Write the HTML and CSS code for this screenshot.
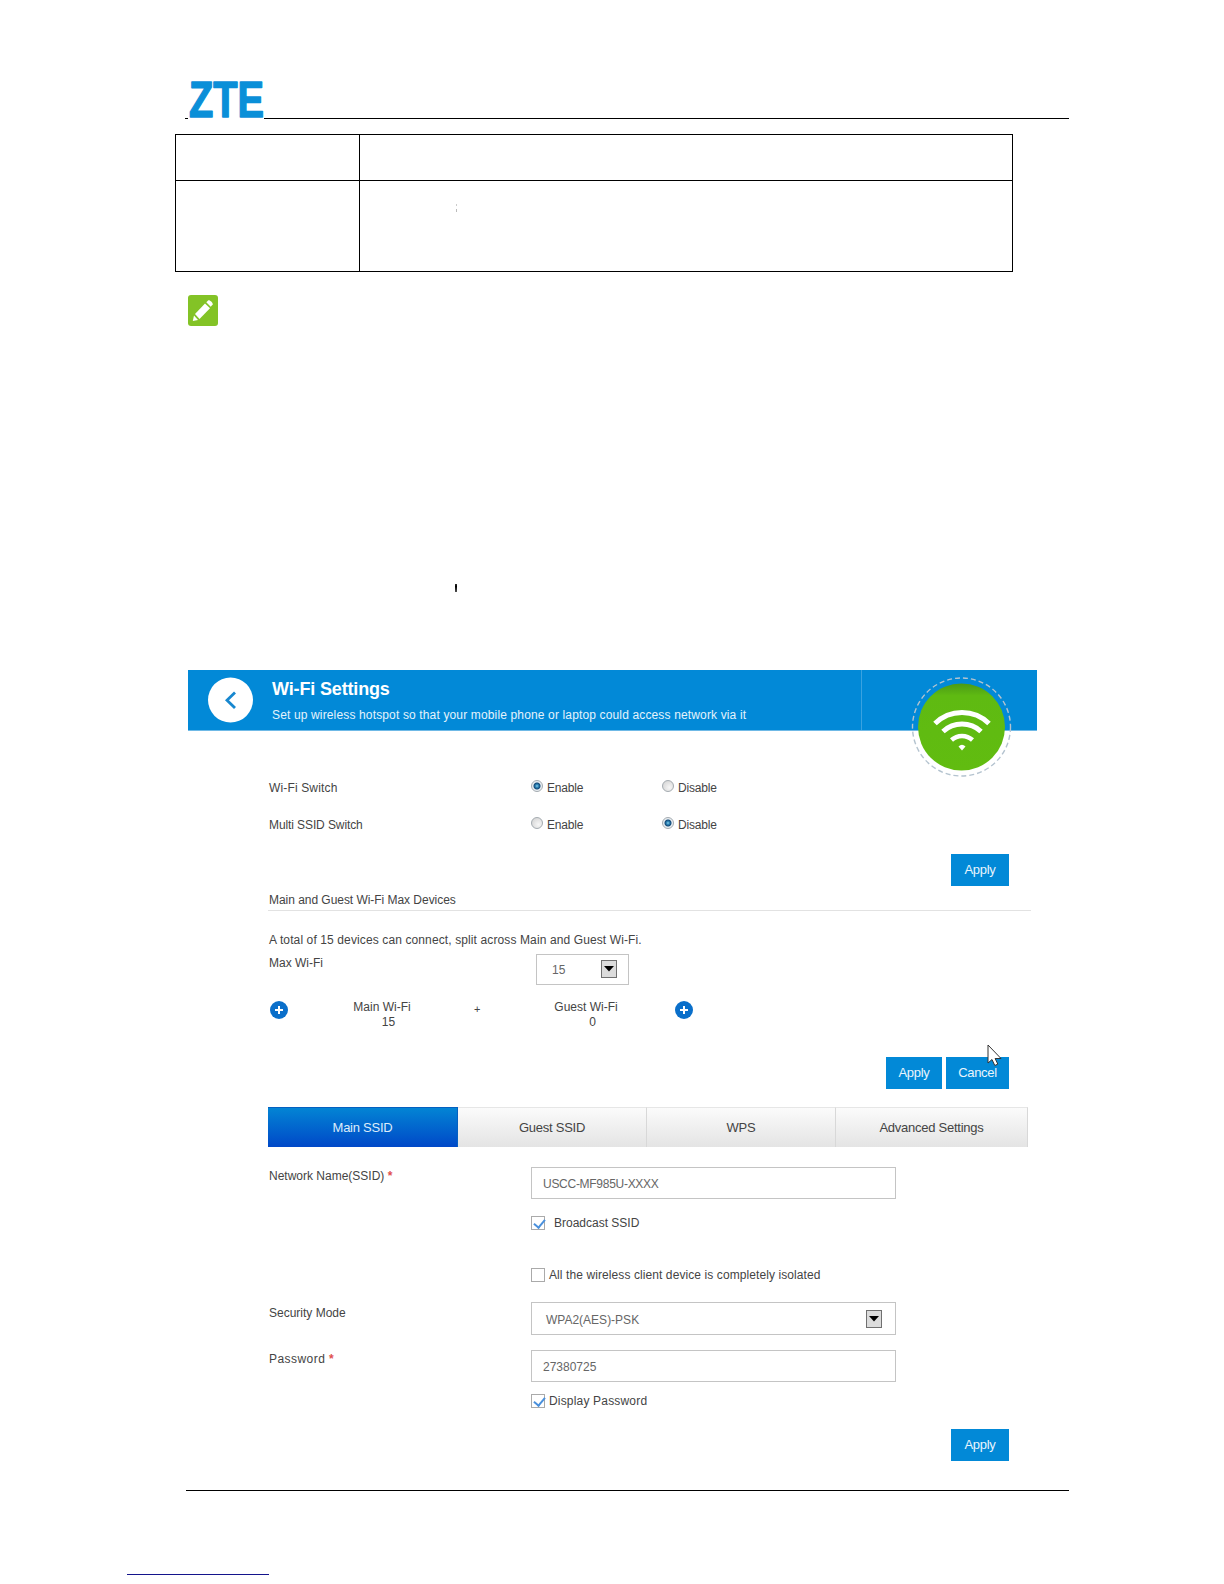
FILE: index.html
```
<!DOCTYPE html>
<html lang="en">
<head>
  <meta charset="UTF-8">
  <meta name="viewport" content="width=device-width, initial-scale=1.0">
  <title>Wi-Fi Settings</title>
  <link rel="stylesheet" href="styles.css">
</head>
<body>
  <header class="page-header">
    <svg class="logo" width="76" height="64" viewBox="0 0 76 64">
      <text x="1" y="54" textLength="75" lengthAdjust="spacingAndGlyphs">ZTE</text>
    </svg>
  </header>

  <table class="params">
    <tr class="row-small"><td class="name"></td><td></td></tr>
    <tr class="row-big"><td class="name"></td><td><div class="speck"></div></td></tr>
  </table>

  <svg class="note-icon" width="30" height="31" viewBox="0 0 30 31">
    <rect width="30" height="31" rx="3" fill="#83c326"/>
    <path d="M4.800 26l1.200-5.500 4 4.500z" fill="#fff"/>
    <path d="M7 19L17 8.500l5 4.800L11.500 24z" fill="#fff"/>
    <path d="M18.300 7.300l2-2c1.400-.6 5 2.500 4.400 4.300l-2 2.200z" fill="#fff"/>
  </svg>
  <div class="tick"></div>

  <main class="panel">
    <div class="banner">
      <svg class="back" width="46" height="46" viewBox="0 0 46 46">
        <circle cx="23.500" cy="23" r="22.500" fill="#fff"/>
        <path d="M28 15.500L20 23.300l8 7.800" fill="none" stroke="#1787cf" stroke-width="2.800"/>
      </svg>
      <div class="banner-text">
        <h1>Wi-Fi Settings</h1>
        <p>Set up wireless hotspot so that your mobile phone or laptop could access network via it</p>
      </div>
      <div class="banner-side"></div>
      <svg class="wifi" width="104" height="104" viewBox="0 0 104 104">
        <defs>
          <linearGradient id="green" x1="0" y1="0" x2="0" y2="1">
            <stop offset="0" stop-color="#4b9a16"/>
            <stop offset=".14" stop-color="#5fba12"/>
            <stop offset="1" stop-color="#61bc10"/>
          </linearGradient>
        </defs>
        <path d="M2.500 56a49.500 49.500 0 0 0 99 0z" fill="#fff"/>
        <circle cx="51.500" cy="52" r="49" fill="none" stroke="#b4c3cf" stroke-width="1.400" stroke-dasharray="5 3"/>
        <circle cx="51.500" cy="52" r="43.500" fill="url(#green)"/>
        <g fill="none" stroke="#fff" stroke-width="5">
          <path d="M25 48.500a38.500 38.500 0 0 1 54 0"/>
          <path d="M33 56.500a28 28 0 0 1 38 0"/>
          <path d="M41.500 65a15.500 15.500 0 0 1 21 0" stroke-width="4.500"/>
        </g>
        <path d="M48.500 71.500q3.500-3.500 7 0L52 75.500z" fill="#fff"/>
      </svg>
    </div>

    <div class="content">
      <div class="row switch-row">
        <span class="loose">Wi-Fi Switch</span>
        <label><input type="radio" name="wifi" checked>Enable</label>
        <label><input type="radio" name="wifi">Disable</label>
      </div>
      <div class="row switch-row">
        <span class="tight">Multi SSID Switch</span>
        <label><input type="radio" name="multi">Enable</label>
        <label><input type="radio" name="multi" checked>Disable</label>
      </div>
      <div class="buttons">
        <button>Apply</button>
      </div>

      <h2>Main and Guest Wi-Fi Max Devices</h2>
      <p class="info">A total of 15 devices can connect, split across Main and Guest Wi-Fi.</p>
      <div class="max-row">
        <span>Max Wi-Fi</span>
        <div class="select small">
          <span>15</span>
          <svg width="16" height="18" viewBox="0 0 16 18"><rect class="arrow-box" x=".5" y=".5" width="15" height="17"/><path d="M3 6h10l-5 5.500z"/></svg>
        </div>
      </div>
      <div class="counts">
        <svg class="plus" width="18" height="18" viewBox="0 0 18 18"><circle cx="9" cy="9" r="9"/><path d="M5 9h8M9 5v8"/></svg>
        <div class="main">Main Wi-Fi<br><span class="shift">15</span></div>
        <div class="sign">+</div>
        <div class="guest">Guest Wi-Fi<br><span class="shift">0</span></div>
        <svg class="plus" width="18" height="18" viewBox="0 0 18 18"><circle cx="9" cy="9" r="9"/><path d="M5 9h8M9 5v8"/></svg>
      </div>
      <div class="buttons pair">
        <button class="narrow">Apply</button>
        <button class="wide">Cancel</button>
        <svg class="cursor" width="16" height="23" viewBox="0 0 16 23"><path d="M1 1v18l4-3.500 2.800 6 3-1.400-2.700-5.600H14z"/></svg>
      </div>

      <nav class="tabs">
        <a class="active">Main SSID</a>
        <a>Guest SSID</a>
        <a>WPS</a>
        <a>Advanced Settings</a>
      </nav>

      <form>
        <div class="field">
          <span class="label">Network Name(SSID) <b>*</b></span>
          <input type="text" class="ssid" value="USCC-MF985U-XXXX">
        </div>
        <label class="check broadcast"><input type="checkbox" checked>Broadcast SSID</label>
        <label class="check isolated"><input type="checkbox">All the wireless client device is completely isolated</label>
        <div class="field security">
          <span class="label">Security Mode</span>
          <div class="select">
            <span>WPA2(AES)-PSK</span>
            <svg width="16" height="18" viewBox="0 0 16 18"><rect class="arrow-box" x=".5" y=".5" width="15" height="17"/><path d="M3 6h10l-5 5.500z"/></svg>
          </div>
        </div>
        <div class="field password">
          <span class="label">Password <b>*</b></span>
          <input type="text" value="27380725">
        </div>
        <label class="check display"><input type="checkbox" checked>Display Password</label>
        <div class="buttons">
          <button type="button">Apply</button>
        </div>
      </form>
    </div>
  </main>

  <footer>
    <div class="footer-link"></div>
  </footer>
</body>
</html>
```
FILE: styles.css
```
* { box-sizing: border-box; }
:root {
  --blue: #0289d7;
  --text: #444;
}
body {
  margin: 0;
  height: 1584px;
  overflow: hidden;
  background: #fff;
  color: var(--text);
  font: 12px/14px "Liberation Sans", Arial, sans-serif;
}
h1, h2, p { margin: 0; font-weight: normal; }

.page-header {
  width: 884px;
  height: 119px;
  margin-left: 185px;
  padding: 63px 0 0 3px;
  border-bottom: 1px solid #000;
}
.logo {
  display: block;
  overflow: visible;
  background: #fff;
}
.logo text {
  font: bold 50px "Liberation Sans", Arial, sans-serif;
  fill: #0a8fd8;
  stroke: #0a8fd8;
  stroke-width: 1.5;
  stroke-linejoin: round;
}

.params {
  width: 838px;
  margin: 15px 0 0 175px;
  border-collapse: collapse;
  table-layout: fixed;
}
.params td {
  padding: 0;
  border: 1px solid #000;
  vertical-align: top;
}
.params .name { width: 184px; }
.row-small { height: 46px; }
.row-big { height: 91px; }
.speck {
  width: 1px;
  height: 8px;
  margin: 23px 0 0 96px;
  border-top: 2px solid #ccc;
  border-bottom: 3px solid #bbb;
}
.note-icon {
  display: block;
  margin: 23px 0 0 188px;
}
.tick {
  width: 2px;
  height: 8px;
  margin: 258px 0 0 455px;
  background: linear-gradient(#333, #000 30%, #555);
}

.panel {
  width: 849px;
  margin: 78px 0 0 188px;
}
.banner {
  position: relative;
  display: flex;
  height: 61px;
  padding-left: 19px;
  background: var(--blue);
  border-bottom: 1px solid #6fb9e6;
}
.back { margin-top: 7px; }
.banner-text {
  width: 608px;
  padding: 9px 0 0 19px;
  color: #fff;
}
.banner h1 {
  font-size: 18px;
  font-weight: bold;
  line-height: 20px;
  letter-spacing: -.15px;
}
.banner p {
  margin-top: 9px;
  color: #e4f3fc;
  letter-spacing: .145px;
}
.banner-side {
  flex: 1;
  border-left: 1px solid #3aa2e0;
}
.wifi {
  position: absolute;
  left: 722px;
  top: 5px;
}

.content { padding: 50px 6px 0 80px; }
.row {
  display: grid;
  grid-template-columns: 263px 131px 1fr;
  height: 14px;
}
.row + .row { margin-top: 23px; }
.row span { padding-left: 1px; }
.row label {
  display: flex;
  letter-spacing: -.2px;
}
.loose { letter-spacing: .15px; }
.tight { letter-spacing: -.1px; }
input[type=radio] {
  appearance: none;
  width: 12px;
  height: 12px;
  margin: -1px 4px 0 0;
  border: 1px solid #a4abb0;
  border-radius: 50%;
  background: radial-gradient(circle at 65% 65%, #f6f6f6, #d0d0d0);
}
input[type=radio]:checked {
  background: radial-gradient(circle at 50% 50%, #8fd0ea 0, #2f86b8 1.5px, #134a78 3px, #e9eef2 4px);
}

.buttons {
  display: flex;
  justify-content: flex-end;
  margin: 22px 22px 0 0;
}
button {
  width: 58px;
  height: 32px;
  padding: 0 0 1px;
  border: none;
  background: var(--blue);
  color: #e9f5fd;
  font: 13px "Liberation Sans", Arial, sans-serif;
  letter-spacing: -.3px;
}
.pair {
  position: relative;
  gap: 4px;
  margin-top: 27px;
}
.narrow { width: 56px; }
.wide { width: 63px; }
.cursor {
  position: absolute;
  right: 6px;
  top: -13px;
  fill: #fff;
  stroke: #333;
}

h2 {
  height: 17px;
  margin-top: 8px;
  border-bottom: 1px solid #e2e2e2;
  font-size: 12px;
  line-height: 13px;
  padding-left: 1px;
  letter-spacing: -.04px;
}
.info {
  margin-top: 22px;
  padding-left: 1px;
  letter-spacing: .115px;
}
.max-row {
  display: grid;
  grid-template-columns: 268px 93px;
  margin-top: 7px;
}
.max-row > span { padding: 2px 0 0 1px; }
.select {
  display: flex;
  justify-content: space-between;
  height: 33px;
  padding: 7px 13px 0 14px;
  border: 1px solid #c4c4c4;
  color: #666;
}
.select span { padding-top: 3px; }
.select.small {
  height: 31px;
  padding: 5px 11px 0 15px;
}
.arrow-box {
  fill: #dcdcdc;
  stroke: #707070;
}
.counts {
  display: grid;
  grid-template-columns: 20px 186px 4px 195px 20px;
  margin-top: 15px;
  line-height: 15px;
  text-align: center;
}
.counts .main { padding-left: 2px; }
.counts .guest { padding-left: 21px; }
.counts .shift { padding-left: 13px; }
.sign { font-size: 11px; line-height: 18px; }
.plus { margin: 1px 0 0 2px; }
.plus circle { fill: #0a6fca; }
.plus path { stroke: #fff; stroke-width: 2; }

.tabs {
  display: grid;
  grid-template-columns: 190px 189px 189px 192px;
  width: 760px;
  height: 40px;
  margin-top: 18px;
  text-align: center;
  font-size: 13px;
  letter-spacing: -.25px;
}
.tabs a {
  height: 40px;
  background: linear-gradient(#fbfbfb, #e4e4e4);
  border-top: 1px solid #e6e6e6;
  border-right: 1px solid #d8d8d8;
  line-height: 40px;
}
.tabs .active {
  background: linear-gradient(#0384d4, #0048c8);
  border-color: #0560c0;
  color: #dcecfb;
}

.field {
  display: grid;
  grid-template-columns: 263px 365px;
  margin-top: 20px;
}
.label { padding: 2px 0 0 1px; }
.label b { color: #e05050; }
input[type=text] {
  width: 365px;
  height: 32px;
  padding: 2px 11px 0;
  border: 1px solid #c4c4c4;
  color: #666;
  font: 12px "Liberation Sans", Arial, sans-serif;
}
input.ssid { letter-spacing: -.28px; }
.check {
  display: flex;
  gap: 4px;
  height: 14px;
  margin-left: 263px;
}
input[type=checkbox] {
  appearance: none;
  width: 14px;
  height: 14px;
  margin: 0;
  border: 1px solid #aaa;
  background: #fff;
}
/* tick mark */
input[type=checkbox]:checked::before {
  content: "";
  display: block;
  width: 5px;
  height: 9px;
  margin: 0 0 0 4px;
  border: solid #4a90dc;
  border-width: 0 2px 2px 0;
  transform: rotate(40deg);
}
.broadcast {
  gap: 9px;
  margin-top: 17px;
}
.isolated {
  margin-top: 38px;
  letter-spacing: .09px;
}
.security .label { padding-top: 4px; }
.password { margin-top: 15px; }
.password .label { letter-spacing: .45px; }
.password input { padding-top: 1px; }
.display {
  margin-top: 12px;
  letter-spacing: .18px;
}
form .buttons { margin-top: 21px; }

footer {
  width: 883px;
  margin: 29px 0 0 186px;
  border-top: 1px solid #000;
}
.footer-link {
  width: 142px;
  margin: 83px 0 0 -59px;
  border-top: 1px solid #14148c;
}
```
